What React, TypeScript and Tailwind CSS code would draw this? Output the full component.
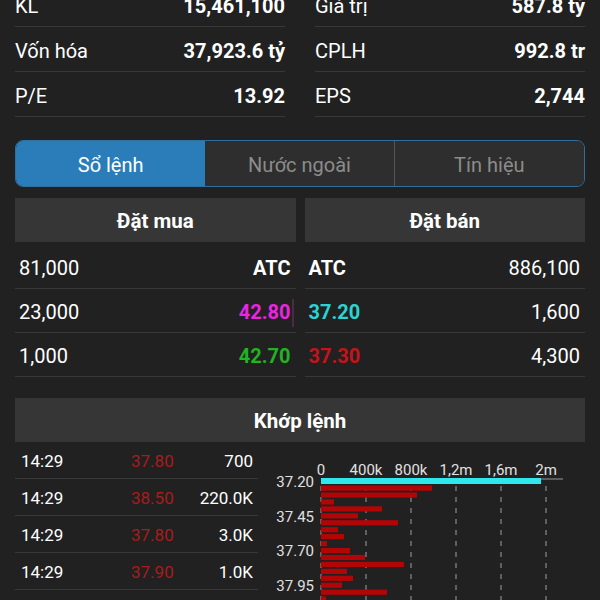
import React from 'react'

const stats = [
    ['KL', '15,461,100', 'Giá trị', '587.8 tỷ'],
    ['Vốn hóa', '37,923.6 tỷ', 'CPLH', '992.8 tr'],
    ['P/E', '13.92', 'EPS', '2,744'],
]

const trades = [
    ['14:29', '37.80', '700'],
    ['14:29', '38.50', '220.0K'],
    ['14:29', '37.80', '3.0K'],
    ['14:29', '37.90', '1.0K'],
]

// bar lengths in px from the zero line, one per 0.05 step below 37.20
const redBars = [111, 96, 13, 61, 37, 77, 17, 23, 6, 29, 44, 83, 26, 32, 21, 66, 5]

function VolumeChart() {
    const ticks = ['0', '400k', '800k', '1,2m', '1,6m', '2m']
    const prices = ['37.20', '37.45', '37.70', '37.95']
    return (
        <svg width="330" height="158" className="shrink-0" style={{ fontFamily: 'Roboto, sans-serif' }}>
            {ticks.map((t, i) => (
                <g key={t}>
                    <text x={51 + i * 45} y={33} fontSize="15" fill="#e0e0e0" textAnchor="middle">
                        {t}
                    </text>
                    <line x1={51 + i * 45} y1={44} x2={51 + i * 45} y2={158} stroke="#8a8a8a" strokeWidth="1.2" strokeDasharray="5 6" />
                </g>
            ))}
            <line x1={51} y1={37} x2={293} y2={37} stroke="#9a9a9a" strokeWidth="1" />
            <rect x={51} y={36} width={220} height={6} fill="#2ee8ec" />
            {redBars.map((w, i) => (
                <rect key={i} x={51} y={43.5 + i * 6.94} width={w} height={5.2} fill="#b20606" />
            ))}
            {prices.map((p, i) => (
                <text key={p} x={44} y={45 + i * 34.7} fontSize="15" fill="#e0e0e0" textAnchor="end">
                    {p}
                </text>
            ))}
        </svg>
    )
}

export default function App() {
    return (
        <div className="h-[600px] w-[600px] overflow-hidden bg-[#212121] px-[15px] text-white" style={{ fontFamily: 'Roboto, "Noto Sans", sans-serif' }}>
            <div className="-mt-[18px] grid grid-cols-2 gap-x-[30px]">
                {stats.map(([l1, v1, l2, v2]) => (
                    <React.Fragment key={l1}>
                        <div className="flex h-[45px] items-center justify-between border-b border-[#383838] pt-[3px] text-[20px]">
                            <span>{l1}</span>
                            <span className="font-bold">{v1}</span>
                        </div>
                        <div className="flex h-[45px] items-center justify-between border-b border-[#383838] pt-[3px] text-[20px]">
                            <span>{l2}</span>
                            <span className="font-bold">{v2}</span>
                        </div>
                    </React.Fragment>
                ))}
            </div>

            <div className="mt-[23px] grid h-[47px] grid-cols-3 overflow-hidden rounded-lg border border-[#2f6f9c] pt-[2px] text-[20px]">
                <div className="-mt-[2px] flex items-center justify-center bg-[#2a7db9] pt-[2px] text-white">Sổ lệnh</div>
                <div className="-mt-[2px] flex items-center justify-center border-r border-[#555] bg-[#2e2e2e] pt-[2px] text-[#8c8c8c]">Nước ngoài</div>
                <div className="-mt-[2px] flex items-center justify-center bg-[#2e2e2e] pt-[2px] text-[#8c8c8c]">Tín hiệu</div>
            </div>

            <div className="mt-[11px] grid grid-cols-2 gap-x-[9px]">
                <div className="flex h-[44px] items-center justify-center bg-[#363636] pt-[2px] text-[20.5px] font-bold">Đặt mua</div>
                <div className="flex h-[44px] items-center justify-center bg-[#363636] pt-[2px] text-[20.5px] font-bold">Đặt bán</div>
            </div>

            <div className="mt-[3px] grid grid-cols-2 gap-x-[9px] text-[20px]">
                <div>
                    <div className="flex h-[44px] items-center justify-between border-b border-[#383838] pl-[4px] pr-[5px] pt-[2px]">
                        <span>81,000</span>
                        <span className="font-bold">ATC</span>
                    </div>
                    <div className="relative flex h-[44px] items-center justify-between border-b border-[#383838] pl-[4px] pr-[5px] pt-[2px]">
                        <span>23,000</span>
                        <span className="font-bold text-[#e826e0]">42.80</span>
                        <div className="absolute right-[2px] top-[10px] h-[28px] w-[2px] bg-[#4a2a48]" />
                    </div>
                    <div className="flex h-[44px] items-center justify-between border-b border-[#383838] pl-[4px] pr-[5px] pt-[2px]">
                        <span>1,000</span>
                        <span className="font-bold text-[#22b322]">42.70</span>
                    </div>
                </div>
                <div>
                    <div className="flex h-[44px] items-center justify-between border-b border-[#383838] pl-[4px] pr-[5px] pt-[2px]">
                        <span className="font-bold">ATC</span>
                        <span>886,100</span>
                    </div>
                    <div className="flex h-[44px] items-center justify-between border-b border-[#383838] pl-[4px] pr-[5px] pt-[2px]">
                        <span className="font-bold text-[#2cd3d3]">37.20</span>
                        <span>1,600</span>
                    </div>
                    <div className="flex h-[44px] items-center justify-between border-b border-[#383838] pl-[4px] pr-[5px] pt-[2px]">
                        <span className="font-bold text-[#c4141a]">37.30</span>
                        <span>4,300</span>
                    </div>
                </div>
            </div>

            <div className="mt-[21px] flex h-[44px] items-center justify-center bg-[#363636] pt-[3px] text-[20.5px] font-bold">Khớp lệnh</div>

            <div className="flex">
                <div className="w-[243px] shrink-0 text-[17px]">
                    {trades.map(([t, p, v], i) => (
                        <div key={i} className="grid h-[37px] grid-cols-[110px_1fr_auto] items-center border-b border-[#383838] pl-[6px] pr-[5px] pt-[3px]">
                            <span>{t}</span>
                            <span className="text-[#a81c1c]">{p}</span>
                            <span className="text-right">{v}</span>
                        </div>
                    ))}
                </div>
                <div className="ml-[12px]">
                    <VolumeChart />
                </div>
            </div>
        </div>
    )
}
